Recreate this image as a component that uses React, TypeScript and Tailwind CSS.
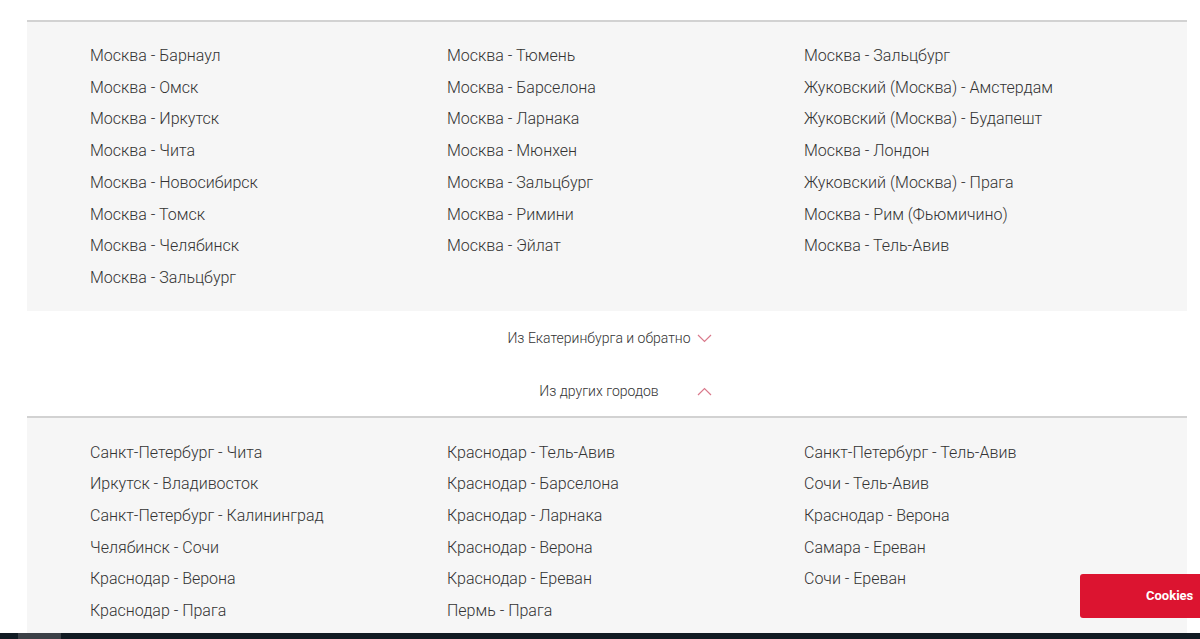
import React from "react";

const moscow: string[][] = [
  [
    "Москва - Барнаул",
    "Москва - Омск",
    "Москва - Иркутск",
    "Москва - Чита",
    "Москва - Новосибирск",
    "Москва - Томск",
    "Москва - Челябинск",
    "Москва - Зальцбург",
  ],
  [
    "Москва - Тюмень",
    "Москва - Барселона",
    "Москва - Ларнака",
    "Москва - Мюнхен",
    "Москва - Зальцбург",
    "Москва - Римини",
    "Москва - Эйлат",
  ],
  [
    "Москва - Зальцбург",
    "Жуковский (Москва) - Амстердам",
    "Жуковский (Москва) - Будапешт",
    "Москва - Лондон",
    "Жуковский (Москва) - Прага",
    "Москва - Рим (Фьюмичино)",
    "Москва - Тель-Авив",
  ],
];

const others: string[][] = [
  [
    "Санкт-Петербург - Чита",
    "Иркутск - Владивосток",
    "Санкт-Петербург - Калининград",
    "Челябинск - Сочи",
    "Краснодар - Верона",
    "Краснодар - Прага",
  ],
  [
    "Краснодар - Тель-Авив",
    "Краснодар - Барселона",
    "Краснодар - Ларнака",
    "Краснодар - Верона",
    "Краснодар - Ереван",
    "Пермь - Прага",
  ],
  [
    "Санкт-Петербург - Тель-Авив",
    "Сочи - Тель-Авив",
    "Краснодар - Верона",
    "Самара - Ереван",
    "Сочи - Ереван",
  ],
];

function RouteGrid({ cols }: { cols: string[][] }) {
  return (
    <div className="grid grid-cols-[357px_357px_1fr] pl-[63px]">
      {cols.map((col, i) => (
        <ul key={i} className="flex flex-col">
          {col.map((r, j) => (
            <li key={j} className="leading-[31.7px] text-[16px] font-light text-[#333]">
              <a href="#">{r}</a>
            </li>
          ))}
        </ul>
      ))}
    </div>
  );
}

function Chevron({ up }: { up?: boolean }) {
  return (
    <svg width="15" height="9" viewBox="0 0 15 9" fill="none" stroke="#d9798b" strokeWidth="1.2">
      {up ? <path d="M1 8 L7.5 1.5 L14 8" /> : <path d="M1 1 L7.5 7.5 L14 1" />}
    </svg>
  );
}

function Toggle({ label, up }: { label: string; up?: boolean }) {
  return (
    <button type="button" className="relative mx-auto flex w-[220px] justify-center pr-4 text-[14px] font-light text-[#333] leading-[20px]">
      <span>{label}</span>
      <span className="absolute right-[5px] top-[6px]">
        <Chevron up={up} />
      </span>
    </button>
  );
}

export default function App() {
  return (
    <div className="relative h-[639px] overflow-hidden bg-white" style={{ fontFamily: "Roboto, 'Liberation Sans', sans-serif" }}>
      <div className="ml-[27px] w-[1160px] pt-[20px]">
        <div className="h-[2px] bg-[#d2d2d2]" />
        <section className="bg-[#f6f6f6] pt-[18px] pb-[17px]">
          <RouteGrid cols={moscow} />
        </section>
        <div className="pt-[17px]">
          <Toggle label="Из Екатеринбурга и обратно" />
        </div>
        <div className="pt-[33px]">
          <Toggle label="Из других городов" up />
        </div>
        <div className="mt-[15px] h-[2px] bg-[#d2d2d2]" />
        <section className="h-[215px] bg-[#f6f6f6] pt-[19px]">
          <RouteGrid cols={others} />
        </section>
      </div>
      <div className="flex h-[10px] bg-[#111b23]">
        <div className="ml-[18px] w-[43px] bg-[#3b4046]" />
      </div>
      <button type="button" className="absolute left-[1080px] top-[574px] flex h-[44px] w-[130px] items-center rounded-[3px] bg-[#dc1430] pl-[66px] text-[13px] font-bold text-white">
        Cookies
      </button>
    </div>
  );
}
